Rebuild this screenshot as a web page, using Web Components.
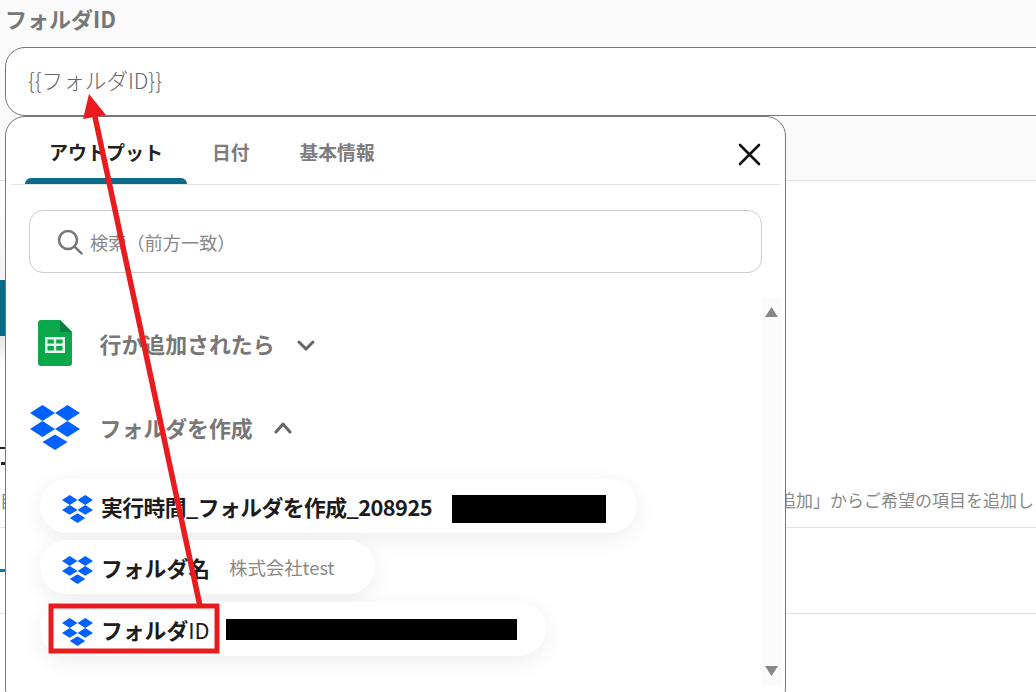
<!DOCTYPE html>
<html lang="ja">
<head>
<meta charset="utf-8">
<title>フォルダID</title>
<style>
  html, body { margin: 0; height: 100%; }
  body {
    width: 1036px; height: 692px; overflow: hidden; position: relative;
    background: #fff;
    font-family: "Noto Sans CJK JP", "Noto Sans", sans-serif;
  }
</style>
</head>
<body>
  <form-background></form-background>

  <output-popup>
    <service-group name="行か追加されたら" open-state="closed" slot="groups">
      <sheets-icon slot="icon"></sheets-icon>
    </service-group>
    <service-group name="フォルダを作成" open-state="open" slot="groups">
      <dropbox-icon slot="icon" size="50"></dropbox-icon>
    </service-group>
    <div slot="groups" style="display:flex;flex-direction:column;align-items:flex-start;gap:7px;margin:0 0 0 34px">
      <output-pill label="実行時間_フォルダを作成_208925" spacing="-.56" gap="20" mask="154" mask-height="28" mask-shift="0" pad="31"></output-pill>
      <output-pill label="フォルダ名" value="株式会社test" gap="19" pad="40"></output-pill>
      <output-pill label="フォルダ" label-end="ID" gap="16" mask="291" mask-height="21" mask-shift="-6" pad="29" style="margin-top:1px"></output-pill>
    </div>
  </output-popup>

  <red-annotation></red-annotation>

<script>
// Dropbox logo, five diamonds
class DropboxIcon extends HTMLElement {
  connectedCallback() {
    const size = parseFloat(this.getAttribute('size') || 31);
    const height = size * 0.9;
    this.attachShadow({ mode: 'open' }).innerHTML = `
      <style>
        :host { display: block; flex: none; width: ${size}px; height: ${height}px; }
        svg { display: block; }
      </style>
      <svg width="${size}" height="${height}" viewBox="0 0 50 45" fill="#0061fe">
        <polygon points="0,8 12.5,0 25,8 12.5,16"/>
        <polygon points="25,8 37.5,0 50,8 37.5,16"/>
        <polygon points="0,24 12.5,16 25,24 12.5,32"/>
        <polygon points="25,24 37.5,16 50,24 37.5,32"/>
        <polygon points="12.5,37 25,29.5 37.5,37 25,45"/>
      </svg>`;
  }
}
customElements.define('dropbox-icon', DropboxIcon);

// Google Sheets document icon
class SheetsIcon extends HTMLElement {
  connectedCallback() {
    this.attachShadow({ mode: 'open' }).innerHTML = `
      <style>
        :host { display: block; flex: none; width: 34px; height: 46px; }
        svg { display: block; }
      </style>
      <svg width="34" height="46" viewBox="0 0 34 46">
        <path d="M3 0H22L34 12V43a3 3 0 0 1-3 3H3a3 3 0 0 1-3-3V3a3 3 0 0 1 3-3z" fill="#0aa84b"/>
        <path d="M22 0L34 12H22z" fill="#0b8043"/>
        <path d="M7 17H27V33H7z M9.5 19.5V23.5H15.8V19.5z M18.2 19.5V23.5H24.5V19.5z M9.5 26V30.5H15.8V26z M18.2 26V30.5H24.5V26z" fill="#e8f5ec" fill-rule="evenodd"/>
      </svg>`;
  }
}
customElements.define('sheets-icon', SheetsIcon);

// Everything behind the popup: label, field and the page rows
class FormBackground extends HTMLElement {
  connectedCallback() {
    this.attachShadow({ mode: 'open' }).innerHTML = `
      <style>
        :host { display: block; width: 1036px; height: 692px; color: #888; overflow: hidden; }
        .label {
          height: 47px; box-sizing: border-box; padding: 2px 0 0 5px; background: #fafafa;
          font-size: 22px; line-height: 32px; font-weight: 700; color: #777;
        }
        .field-wrap { height: 69px; box-sizing: border-box; padding-left: 5px; background: #fafafa; }
        .field {
          height: 100%; box-sizing: border-box; margin-right: -30px; padding: 0 0 5px 22px;
          display: flex; align-items: center;
          background: #fff; border: 1px solid #777; border-radius: 20px;
          font-size: 21.6px; color: #666; font-weight: 300;
        }
        .band { height: 64px; background: #fafafa; border-bottom: 1px solid #e4e4e4; }
        .tall { height: 346px; border-bottom: 1px solid #e6e6e6; display: flex; }
        .side { width: 5px; flex: none; }
        .soft { height: 99px; background: linear-gradient(#fff, #f3f3f3); }
        .tab { height: 56px; background: #0b6a85; }
        .fade { height: 30px; background: linear-gradient(#e4e4e4, #fff); }
        .marks { height: 2px; margin-top: 81px; background: #222; }
        .marks.low { width: 4px; height: 3px; margin: 13px 0 0 1px; }
        /* the popup covers all of this glyph but its first pixels */
        .cut { margin-top: 26px; width: 17px; font-size: 17px; line-height: 20px; white-space: nowrap; }
        .hint {
          margin: auto 0 14px 774px; white-space: nowrap; font-size: 17px; line-height: 26px;
        }
        .row { height: 85px; border-bottom: 1px solid #e6e6e6; display: flow-root; }
        .row i { display: block; width: 5px; height: 3px; margin-top: 41px; background: #0b7f9a; }
      </style>
      <div class="label">フォルダID</div>
      <div class="field-wrap"><div class="field">{{フォルダID}}</div></div>
      <div class="band"></div>
      <div class="tall">
        <div class="side">
          <div class="soft"></div>
          <div class="tab"></div>
          <div class="fade"></div>
          <div class="marks"></div>
          <div class="marks low"></div>
          <div class="cut">目</div>
        </div>
        <div class="hint">追加」からご希望の項目を追加し</div>
      </div>
      <div class="row"><i></i></div>`;
  }
}
customElements.define('form-background', FormBackground);

// Popup panel with tabs, search and the scrolling output list
class OutputPopup extends HTMLElement {
  connectedCallback() {
    this.attachShadow({ mode: 'open' }).innerHTML = `
      <style>
        :host {
          display: block; position: absolute; left: 5px; top: 116px;
          width: 781px; height: 592px; box-sizing: border-box;
          background: #fff; border: 1px solid #777; border-radius: 20px;
        }
        .tabs {
          height: 68px; box-sizing: border-box; margin: 0 4px 0 5px; padding-left: 14px;
          display: flex; align-items: stretch; border-bottom: 1px solid #e4e4e4;
          font-size: 18.8px; font-weight: 700; color: #7c7c7c; position: relative;
        }
        .tab { display: flex; align-items: center; height: 68px; padding-bottom: 0; box-sizing: border-box; position: relative; }
        .tab.on { width: 162px; justify-content: center; color: #222; margin-right: 25px; font-size: 19px; }
        .tab.on::after {
          content: ""; position: absolute; left: 0; right: 0; top: 61px; height: 6px;
          background: #0b6a85; border-radius: 6px 6px 0 0;
        }
        .tab.plain { margin-right: 50px; }
        .close { position: absolute; right: 20px; top: 26px; }
        .search {
          margin: 25px 23px 0 23px; height: 63px; box-sizing: border-box;
          display: flex; align-items: center; gap: 7px; padding-left: 27px;
          border: 1px solid #ccc; border-radius: 14px;
          font-size: 18.2px; color: #888;
        }
        .body { position: relative; height: 410px; margin-top: 25px; }
        .scroll {
          position: absolute; left: 756px; top: 0; width: 19px; height: 387px;
          background: #fbfbfb;
        }
        .scroll svg { position: absolute; left: 3px; }
        .list { padding-top: 22px; }
      </style>
      <div class="tabs">
        <div class="tab on">アウトプット</div>
        <div class="tab plain">日付</div>
        <div class="tab plain">基本情報</div>
        <svg class="close" width="23" height="23" viewBox="0 0 23 23" stroke="#111" stroke-width="2.6" stroke-linecap="round">
          <path d="M2 2L21 21M21 2L2 21"/>
        </svg>
      </div>
      <div class="search">
        <svg width="26" height="26" viewBox="0 0 26 26" fill="none" stroke="#777" stroke-width="2.6" stroke-linecap="round">
          <circle cx="11" cy="11" r="9"/><path d="M17.6 17.6L24.4 24.4"/>
        </svg>
        <span>検索（前方一致）</span>
      </div>
      <div class="body">
        <div class="scroll">
          <svg style="top:9px" width="13" height="10" viewBox="0 0 13 10"><path d="M6.5 0L13 10H0z" fill="#888"/></svg>
          <svg style="top:368px" width="13" height="10" viewBox="0 0 13 10"><path d="M6.5 10L13 0H0z" fill="#888"/></svg>
        </div>
        <div class="list"><slot name="groups"></slot></div>
      </div>`;
  }
}
customElements.define('output-popup', OutputPopup);

// Service heading: icon, name and a chevron
class ServiceGroup extends HTMLElement {
  connectedCallback() {
    const name = this.getAttribute('name');
    const isOpen = this.getAttribute('open-state') === 'open';
    const chevron = isOpen ? 'M2 11L9 3L16 11' : 'M2 3L9 10L16 3';
    this.attachShadow({ mode: 'open' }).innerHTML = `
      <style>
        :host { display: flex; align-items: center; height: ${isOpen ? 45 : 46}px; margin-bottom: ${isOpen ? 29 : 39}px; position: relative; padding-left: 93.5px; gap: ${isOpen ? 21 : 22}px; }
        .icon { position: absolute; left: ${isOpen ? 24 : 32}px; top: 0; }
        .name { font-size: 21.9px; font-weight: 700; color: #777; white-space: nowrap; }
        svg { flex: none; margin-top: ${isOpen ? 0 : 5}px; }
      </style>
      <div class="icon"><slot name="icon"></slot></div>
      <span class="name">${name}</span>
      <svg width="18" height="14" viewBox="0 0 18 14" fill="none" stroke="#666" stroke-width="3" stroke-linecap="round" stroke-linejoin="round"><path d="${chevron}"/></svg>`;
  }
}
customElements.define('service-group', ServiceGroup);

// Output pill: small logo, bold label, then a value or a blacked out box
class OutputPill extends HTMLElement {
  connectedCallback() {
    const label = this.getAttribute('label');
    const labelEnd = this.getAttribute('label-end');
    const value = this.getAttribute('value');
    const spacing = this.getAttribute('spacing') || 0;
    const gap = this.getAttribute('gap') || 16;
    const pad = this.getAttribute('pad') || 30;
    const mask = this.getAttribute('mask');
    const maskHeight = this.getAttribute('mask-height') || 28;
    const maskShift = this.getAttribute('mask-shift') || 0;
    this.attachShadow({ mode: 'open' }).innerHTML = `
      <style>
        :host {
          display: inline-flex; align-items: center; box-sizing: border-box; height: 54px;
          padding: 6px ${pad}px 0 22px; background: #fff; border-radius: 27px;
          box-shadow: 0 6px 22px rgba(0,0,0,.07);
        }
        .label { margin: -6px 0 0 8px; font-size: 21.8px; font-weight: 700; color: #1c1c1c; white-space: nowrap; letter-spacing: ${spacing}px; }
        .label b { font-weight: 400; }
        .value { margin: -6px 0 0 ${gap}px; font-size: 18.4px; color: #888; white-space: nowrap; }
        .mask { margin: ${maskShift}px 0 0 ${gap}px; width: ${mask}px; height: ${maskHeight}px; background: #000; flex: none; }
      </style>
      <dropbox-icon></dropbox-icon>
      <span class="label">${label}${labelEnd ? `<b>${labelEnd}</b>` : ''}</span>
      ${value ? `<span class="value">${value}</span>` : ''}
      ${mask ? `<span class="mask"></span>` : ''}`;
  }
}
customElements.define('output-pill', OutputPill);

// Red arrow and rectangle drawn over the screenshot
class RedAnnotation extends HTMLElement {
  connectedCallback() {
    this.attachShadow({ mode: 'open' }).innerHTML = `
      <style>
        :host { display: block; position: absolute; left: 0; top: 0; width: 1036px; height: 692px; pointer-events: none; }
        svg { display: block; }
      </style>
      <svg width="1036" height="692" viewBox="0 0 1036 692">
        <path d="M200 606L94 112" stroke="#e81c1f" stroke-width="5.5" fill="none"/>
        <polygon points="89,94 106,115 83,119" fill="#e81c1f"/>
        <rect x="51" y="606" width="166" height="45" fill="none" stroke="#e81c1f" stroke-width="5"/>
      </svg>`;
  }
}
customElements.define('red-annotation', RedAnnotation);
</script>
</body>
</html>
